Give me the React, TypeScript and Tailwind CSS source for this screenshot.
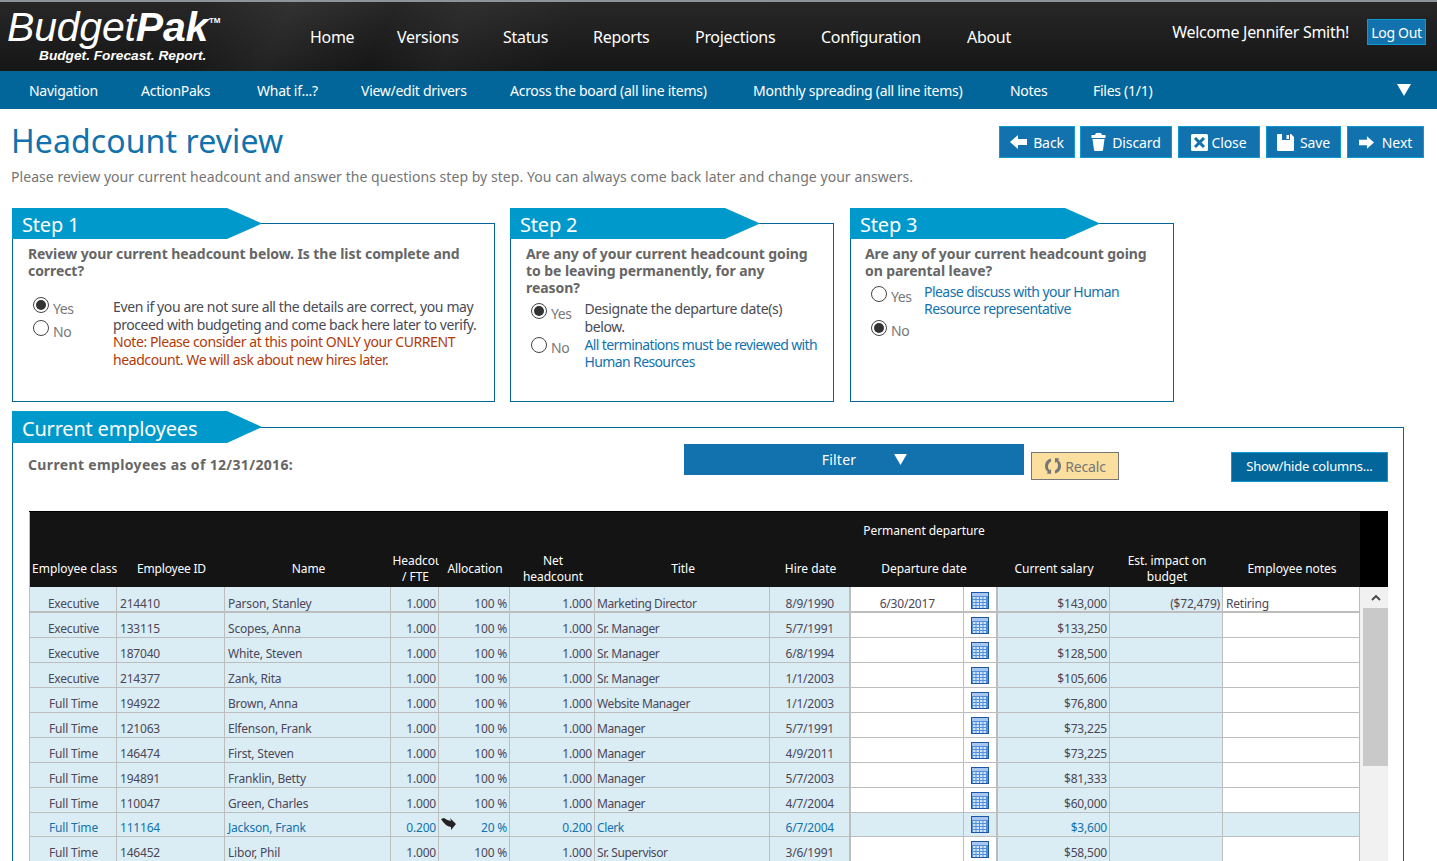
import React from "react";

const font = "font-['Noto_Sans','Open_Sans',sans-serif]";

type Row = { c: string; id: string; n: string; h: string; a: string; t: string; d: string; s: string; i?: string; no?: string; blue?: boolean; dep?: string };
const rows: Row[] = [
  { c: "Executive", id: "214410", n: "Parson, Stanley", h: "1.000", a: "100 %", t: "Marketing Director", d: "8/9/1990", dep: "6/30/2017", s: "$143,000", i: "($72,479)", no: "Retiring" },
  { c: "Executive", id: "133115", n: "Scopes, Anna", h: "1.000", a: "100 %", t: "Sr. Manager", d: "5/7/1991", s: "$133,250" },
  { c: "Executive", id: "187040", n: "White, Steven", h: "1.000", a: "100 %", t: "Sr. Manager", d: "6/8/1994", s: "$128,500" },
  { c: "Executive", id: "214377", n: "Zank, Rita", h: "1.000", a: "100 %", t: "Sr. Manager", d: "1/1/2003", s: "$105,606" },
  { c: "Full Time", id: "194922", n: "Brown, Anna", h: "1.000", a: "100 %", t: "Website Manager", d: "1/1/2003", s: "$76,800" },
  { c: "Full Time", id: "121063", n: "Elfenson, Frank", h: "1.000", a: "100 %", t: "Manager", d: "5/7/1991", s: "$73,225" },
  { c: "Full Time", id: "146474", n: "First, Steven", h: "1.000", a: "100 %", t: "Manager", d: "4/9/2011", s: "$73,225" },
  { c: "Full Time", id: "194891", n: "Franklin, Betty", h: "1.000", a: "100 %", t: "Manager", d: "5/7/2003", s: "$81,333" },
  { c: "Full Time", id: "110047", n: "Green, Charles", h: "1.000", a: "100 %", t: "Manager", d: "4/7/2004", s: "$60,000" },
  { c: "Full Time", id: "111164", n: "Jackson, Frank", h: "0.200", a: "20 %", t: "Clerk", d: "6/7/2004", s: "$3,600", blue: true },
  { c: "Full Time", id: "146452", n: "Libor, Phil", h: "1.000", a: "100 %", t: "Sr. Supervisor", d: "3/6/1991", s: "$58,500" },
];

const Radio = ({ on, label, labelTop = "mt-[3px]" }: { on?: boolean; label: string; labelTop?: string }) => (
  <div className="flex items-start gap-[4px] h-[20px]">
    <span className="w-[16px] h-[16px] rounded-full border border-[#444] bg-white flex items-center justify-center shrink-0">
      {on && <span className="w-[10px] h-[10px] rounded-full bg-[#333]" />}
    </span>
    <span className={`text-[14px] leading-[17px] ${labelTop} text-[#777] tracking-[-0.4px]`}>{label}</span>
  </div>
);

const Flag = ({ children, tall }: { children: React.ReactNode; tall?: boolean }) => (
  <div className={`relative z-10 w-[250px] ${tall ? "h-[32px] leading-[35px]" : "h-[31px] leading-[33px]"} -mb-[16px] bg-[#0099cc] [clip-path:polygon(0_0,215px_0,100%_50%,215px_100%,0_100%)] pl-[10px] text-white text-[20px] tracking-[-0.2px]`}>
    {children}
  </div>
);

const Back = () => (
  <svg width="17" height="14" viewBox="0 0 17 14" fill="#fff"><path d="M0 7 8 0v4h9v6H8v4z" /></svg>
);
const Next = () => (
  <svg width="15" height="13" viewBox="0 0 17 14" fill="#fff"><path d="M17 7 9 0v4H0v6h9v4z" /></svg>
);
const Trash = () => (
  <svg width="15" height="18" viewBox="0 0 15 18" fill="#fff"><path d="M5 0h5l1 2h3.500v3H.5V2H4z" /><path d="M1.500 6h12L12 17q-.2 1-1.200 1H4.200Q3.200 18 3 17z" /></svg>
);
const CloseI = () => (
  <svg width="17" height="17" viewBox="0 0 17 17"><rect width="17" height="17" rx="1.500" fill="#fff" /><path d="M4 4l9 9M13 4l-9 9" stroke="#1272ae" strokeWidth="3" /></svg>
);
const SaveI = () => (
  <svg width="17" height="17" viewBox="0 0 17 17"><path d="M1 0h13l3 3v13a1 1 0 0 1-1 1H1a1 1 0 0 1-1-1V1a1 1 0 0 1 1-1z" fill="#fff" /><path d="M5 0h8v6H5z" fill="#1272ae" /><path d="M9.500 1h2.500v4H9.500z" fill="#fff" /></svg>
);
const Cal = () => (
  <svg width="18" height="17" viewBox="0 0 18 17" className="block">
    <rect x="0.500" y="0.500" width="17" height="16" fill="#4f8fdc" stroke="#1c55a8" />
    <rect x="1" y="1" width="16" height="3" fill="#a9c7ee" />
    {[5, 8, 11, 14].map((y) => [2, 5.500, 9, 12.500].map((x) => (
      <rect key={`${x}-${y}`} x={x} y={y} width="2.500" height="2" fill="#d4e4f8" />
    )))}
  </svg>
);
const Sync = () => (
  <svg width="18" height="18" viewBox="0 0 18 18" fill="#777">
    <path d="M7 1.500C3 2.500 1 5.500 1 9c0 2.500 1 4.500 3 6l-1.500 1.500L7 17V12l-1.300 1.300C4.500 12.300 4 11 4 9.500c0-2 1-4 3-5z" />
    <path d="M11 16.500c4-1 6-4 6-7.500 0-2.500-1-4.500-3-6l1.500-1.500L11 1v5l1.300-1.300C13.500 5.700 14 7 14 8.500c0 2-1 4-3 5z" />
  </svg>
);

const ActionBtn = ({ w, icon, label, gap = "gap-[6px]" }: { w: string; icon: React.ReactNode; label: string; gap?: string }) => (
  <div className={`${w} ${gap} h-[32px] flex items-center justify-center bg-[#1272ae] border border-[#0e9ad0] text-white text-[14px] tracking-[-0.1px]`}>
    {icon}
    <span>{label}</span>
  </div>
);

const Td = ({ children, className = "" }: { children?: React.ReactNode; className?: string }) => (
  <td className={`border-r border-[#bdbdbd] pl-[3px] pr-[2px] align-bottom overflow-hidden whitespace-nowrap ${className}`}>{children}</td>
);

const Th = ({ children, className = "", colSpan }: { children?: React.ReactNode; className?: string; colSpan?: number }) => (
  <th colSpan={colSpan} className={`font-normal align-middle text-center leading-[16px] pl-[2px] pb-[1px] overflow-hidden whitespace-nowrap ${className}`}>{children}</th>
);

const qCls = "font-bold text-[#666] text-[14px] leading-[17px] tracking-[-0.07px]";
const boxCls = "h-[179px] border border-[#03669b] pr-[15px] pt-[21px] text-[14px] leading-[17.500px] tracking-[-0.38px]";

export default function App() {
  return (
    <div className={`w-[1437px] h-[861px] overflow-hidden bg-white ${font}`}>
      <header className="h-[71px] border-t-[2px] border-[#8f949b] bg-[linear-gradient(115deg,transparent_14%,rgba(255,255,255,0.05)_20%,transparent_27%,rgba(255,255,255,0.04)_32%,transparent_40%),linear-gradient(180deg,#272727_0%,#161616_100%)] flex text-white">
        <div className="w-[310px] shrink-0 pl-[7px] pt-[3px] font-['Liberation_Sans',sans-serif] italic">
          <div className="text-[41px] leading-[44px] tracking-[-0.2px] whitespace-nowrap">
            Budget<b>Pak</b>
            <sup className="text-[8px] font-bold not-italic align-top relative top-[16px] ml-[1px]">TM</sup>
          </div>
          <div className="pl-[32px] text-[13.700px] leading-[15px] font-bold -mt-[1px]">Budget. Forecast. Report.</div>
        </div>
        <nav className="grid grid-cols-[87px_106px_90px_102px_126px_146px_auto] pt-[24px] text-[16px] leading-[22px] tracking-[-0.3px] h-[46px]">
          {["Home", "Versions", "Status", "Reports", "Projections", "Configuration", "About"].map((x) => (
            <span key={x}>{x}</span>
          ))}
        </nav>
        <div className="ml-auto flex items-start pr-[11px] pt-[17px] gap-[18px]">
          <span className="text-[16px] leading-[26px] tracking-[-0.3px]">Welcome Jennifer Smith!</span>
          <span className="h-[26px] w-[59px] flex items-center justify-center bg-[#1272ae] border border-[#0e9ad0] text-[14px] tracking-[-0.3px]">Log Out</span>
        </div>
      </header>
      <nav className="h-[38px] bg-[#03669b] flex items-center pl-[29px] pr-[26px] text-white text-[14px] tracking-[-0.27px] whitespace-nowrap">
        <div className="grid grid-cols-[112px_116px_104px_149px_243px_257px_83px_auto]">
          {["Navigation", "ActionPaks", "What if...?", "View/edit drivers", "Across the board (all line items)", "Monthly spreading (all line items)", "Notes", "Files (1/1)"].map((x) => (
            <span key={x}>{x}</span>
          ))}
        </div>
        <svg className="ml-auto" width="14" height="12" viewBox="0 0 14 12" fill="#fff"><path d="M0 0h14L7 12z" /></svg>
      </nav>

      <main className="pl-[12px] pr-[13px]">
        <div className="flex justify-between items-start pt-[17px] h-[50px]">
          <h1 className="text-[#1272ae] text-[32px] leading-[30px] tracking-[0.1px] -ml-[1px]">Headcount review</h1>
          <div className="flex gap-[6px]">
            <ActionBtn w="w-[76px]" icon={<Back />} label="Back" />
            <div className="-ml-[1px]"><ActionBtn w="w-[92px]" icon={<Trash />} label="Discard" /></div>
            <ActionBtn w="w-[82px]" icon={<CloseI />} label="Close" gap="gap-[3px]" />
            <ActionBtn w="w-[75px]" icon={<SaveI />} label="Save" />
            <ActionBtn w="w-[77px]" icon={<Next />} label="Next" gap="gap-[8px]" />
          </div>
        </div>
        <p className="-ml-[1px] mt-[8px] h-[20px] text-[14px] leading-[20px] text-[#757575] tracking-[0.05px] whitespace-nowrap">
          Please review your current headcount and answer the questions step by step. You can always come back later and change your answers.
        </p>

        <div className="flex mt-[21px]">
          <section className="w-[483px]">
            <Flag>Step 1</Flag>
            <div className={`${boxCls} pl-[15px]`}>
              <p className={qCls}>Review your current headcount below. Is the list complete and correct?</p>
              <div className="flex mt-[19px]">
                <div className="w-[85px] pl-[5px] -mt-[1px] flex flex-col gap-[3px]">
                  <Radio on label="Yes" />
                  <Radio label="No" />
                </div>
                <div className="text-[#4a4a55] w-[366px]">
                  <p className="whitespace-nowrap">Even if you are not sure all the details are correct, you may</p>
                  <p className="whitespace-nowrap tracking-[-0.43px]">proceed with budgeting and come back here later to verify.</p>
                  <p className="text-[#b03a0a] tracking-[-0.42px]">Note: Please consider at this point ONLY your CURRENT headcount. We will ask about new hires later.</p>
                </div>
              </div>
            </div>
          </section>
          <section className="w-[324px] ml-[15px]">
            <Flag>Step 2</Flag>
            <div className={`${boxCls} pl-[15px]`}>
              <p className={qCls}>Are any of your current headcount going<br />to be leaving permanently, for any<br />reason?</p>
              <div className="flex mt-[4px]">
                <div className="w-[60px] pl-[5px] pt-[3px] flex flex-col gap-[14px]">
                  <Radio on label="Yes" labelTop="mt-[2px]" />
                  <Radio label="No" labelTop="mt-[2px]" />
                </div>
                <div className="text-[#4a4a55] w-[240px]">
                  <p>Designate the departure date(s)<br />below.</p>
                  <p className="text-[#1272ae] tracking-[-0.62px] leading-[17px] mt-[1px]">All terminations must be reviewed with<br />Human Resources</p>
                </div>
              </div>
            </div>
          </section>
          <section className="w-[324px] ml-[16px]">
            <Flag>Step 3</Flag>
            <div className={`${boxCls} pl-[14px]`}>
              <p className={qCls}>Are any of your current headcount going<br />on parental leave?</p>
              <div className="flex mt-[4px]">
                <div className="w-[59px] pl-[6px] pt-[3px] flex flex-col gap-[14px]">
                  <Radio label="Yes" labelTop="mt-[2px]" />
                  <Radio on label="No" labelTop="mt-[2px]" />
                </div>
                <div className="text-[#1272ae] w-[230px] leading-[17px] tracking-[-0.55px]">
                  <p>Please discuss with your Human Resource representative</p>
                </div>
              </div>
            </div>
          </section>
        </div>

        <section className="w-[1392px] mt-[9px]">
          <Flag tall>Current employees</Flag>
          <div className="border-t border-x border-[#03669b] pl-[15px] pr-[15px] pt-[16px] h-[500px]">
            <div className="flex items-start h-[67px]">
              <p className="font-bold text-[#666] text-[14px] leading-[20px] w-[656px] tracking-[0.35px] pt-[11px] whitespace-nowrap">Current employees as of 12/31/2016:</p>
              <div className="w-[340px] h-[31px] bg-[#1272ae] flex items-center justify-center gap-[38px] pl-[21px] text-white text-[14px] tracking-[0.2px]">
                <span>Filter</span>
                <svg width="13" height="11" viewBox="0 0 14 12" fill="#fff"><path d="M0 0h14L7 12z" /></svg>
              </div>
              <div className="ml-[7px] mt-[8px] w-[88px] h-[28px] bg-[#fbdf9f] border border-[#777] flex items-center justify-center gap-[3px] text-[#777] text-[14px] tracking-[-0.2px]">
                <Sync />
                <span>Recalc</span>
              </div>
              <div className="ml-auto mt-[8px] w-[157px] h-[30px] bg-[#03669b] border border-[#0e9ad0] flex items-center justify-center text-white text-[13px] tracking-[-0.2px]">Show/hide columns...</div>
            </div>
            <div className="flex w-[1359px] ml-[1px] border-t border-black">
              <table className="table-fixed border-collapse w-[1330px] text-[12px] leading-[15px] text-[#4c4658] tracking-[-0.2px] border-l border-[#bdbdbd]">
                <colgroup>
                  {[87, 108, 166, 48, 71, 85, 175, 80, 114, 33, 113, 113, 137].map((w, i) => (
                    <col key={i} style={{ width: w }} />
                  ))}
                </colgroup>
                <thead className="bg-[#141414] text-white tracking-[-0.05px]">
                  <tr className="h-[40px]">
                    <th colSpan={8} />
                    <th colSpan={2} className="font-normal text-center align-middle whitespace-nowrap pb-[4px] pl-[2px]">Permanent departure</th>
                    <th colSpan={3} />
                  </tr>
                  <tr className="h-[35px]">
                    <Th className="tracking-[0px]">Employee class</Th>
                    <Th className="tracking-[-0.2px]">Employee ID</Th>
                    <Th>Name</Th>
                    <Th>Headcount<br />/ FTE</Th>
                    <Th>Allocation</Th>
                    <Th>Net<br />headcount</Th>
                    <Th>Title</Th>
                    <Th>Hire date</Th>
                    <Th colSpan={2}>Departure date</Th>
                    <Th>Current salary</Th>
                    <Th>Est. impact on<br />budget</Th>
                    <Th>Employee notes</Th>
                  </tr>
                </thead>
                <tbody>
                  {rows.map((r, i) => (
                    <tr key={r.id} className={`bg-[#daedf4] ${i === 0 ? "h-[25px] border-b-[2px]" : i === 9 ? "h-[24px] border-b leading-[17px]" : "h-[25px] border-b leading-[17px]"} border-[#bdbdbd] ${r.blue ? "text-[#1272ae]" : ""}`}>
                      <Td className="text-center">{r.c}</Td>
                      <Td>{r.id}</Td>
                      <Td>{r.n}</Td>
                      <Td className="text-right">{r.h}</Td>
                      <Td className="text-right relative">
                        {r.blue && (
                          <svg className="absolute left-[1px] top-[4px]" width="17" height="13" viewBox="0 0 17 13" fill="#222">
                            <path d="M1 2 4 1q4 3 7 3l-1-3 6 6-5 6 0-3Q5 9 1 2z" />
                          </svg>
                        )}
                        {r.a}
                      </Td>
                      <Td className="text-right">{r.h}</Td>
                      <Td><span className="inline-block -ml-[1px] tracking-[-0.4px]">{r.t}</span></Td>
                      <Td className="text-center border-r-[2px]">{r.d}</Td>
                      <Td className={`text-center ${r.blue ? "" : "bg-white"}`}>{r.dep}</Td>
                      <td className={`border-r-[2px] border-[#bdbdbd] px-[7px] align-bottom ${i === 0 ? "pb-[2px]" : "pb-[3px]"} ${r.blue ? "" : "bg-white"}`}><Cal /></td>
                      <Td className="text-right">{r.s}</Td>
                      <Td className="text-right">{r.i}</Td>
                      <Td className={r.blue ? "" : "bg-white"}>{r.no}</Td>
                    </tr>
                  ))}
                </tbody>
              </table>
              <div className="w-[29px] flex flex-col">
                <div className="h-[75px] bg-black" />
                <div className="flex-1 bg-[#f1f1f1] flex flex-col pl-[3px]">
                  <div className="h-[21px] flex items-center justify-center">
                    <svg width="10" height="7" viewBox="0 0 10 7" fill="none" stroke="#444" strokeWidth="1.800"><path d="M1 6l4-4 4 4" /></svg>
                  </div>
                  <div className="h-[158px] bg-[#c9c9c9]" />
                </div>
              </div>
            </div>
          </div>
        </section>
      </main>
    </div>
  );
}
